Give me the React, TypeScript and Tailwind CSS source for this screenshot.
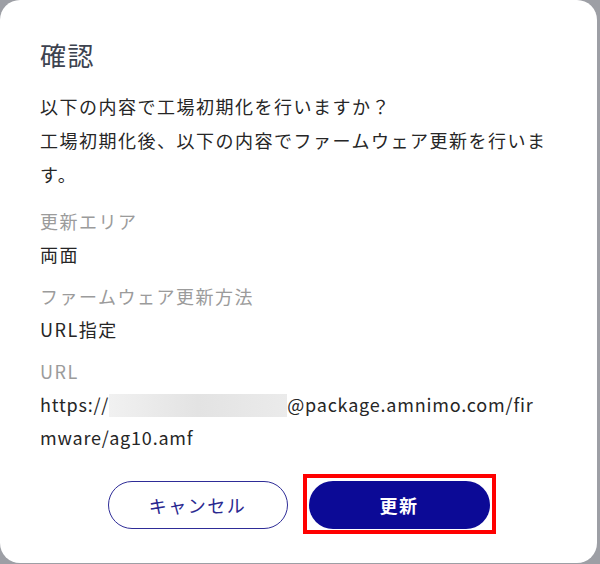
import React from "react";

const Field = ({ label, first, children }: { label: string; first?: boolean; children: React.ReactNode }) => (
    <div className={first ? "mt-[14px] leading-[33px]" : "mt-[9px] leading-[33px]"}>
        <div className="text-[#9b9b9b]">{label}</div>
        <div className="text-[#262626]">{children}</div>
    </div>
);

const App = () => {
    return (
        <div
            className="w-[600px] h-[564px] bg-[#9d9fa5]"
            style={{ fontFamily: '"Noto Sans CJK JP", "Noto Sans", sans-serif' }}
        >
            <div className="w-[597px] h-[563px] bg-white rounded-[20px] pt-[37px]">
                <div className="pl-[40px] pr-[46px]">
                    <h2 className="text-[26px] leading-[36px] tracking-[1.5px] text-[#3d4350]">確認</h2>

                    <div className="mt-[16px] text-[18px] leading-[34px] tracking-[1.5px]">
                        <p className="text-[#262626]">
                            以下の内容で工場初期化を行いますか？
                            <br />
                            工場初期化後、以下の内容でファームウェア更新を行います。
                        </p>

                        <Field label="更新エリア" first>両面</Field>
                        <Field label="ファームウェア更新方法">URL指定</Field>
                        <Field label="URL">
                            <span className="break-all tracking-[0.8px]">
                                https://
                                <span className="inline-block w-[178px] h-[23px] align-[-5px] bg-linear-to-r from-[#f1f1f1] via-[#e3e3e3] to-[#ebebeb]" />
                                @package.amnimo.com/firmware/ag10.amf
                            </span>
                        </Field>
                    </div>
                </div>

                <div className="mt-[27px] flex justify-center gap-[21px]">
                    <button className="w-[180px] h-[48px] rounded-full border-[1.5px] border-[#2e2c97] bg-white text-[18px] tracking-[1.5px] text-[#2a2890]">
                        キャンセル
                    </button>
                    <div className="relative">
                        <button className="w-[181px] h-[48px] rounded-full bg-[#0c0a96] text-[18px] tracking-[1.5px] font-bold text-white">
                            更新
                        </button>
                        <span className="absolute -left-[6px] -right-[6px] -top-[7px] -bottom-[5px] border-[4px] border-[#ff0000] pointer-events-none" />
                    </div>
                </div>
            </div>
        </div>
    );
};

export default App;
